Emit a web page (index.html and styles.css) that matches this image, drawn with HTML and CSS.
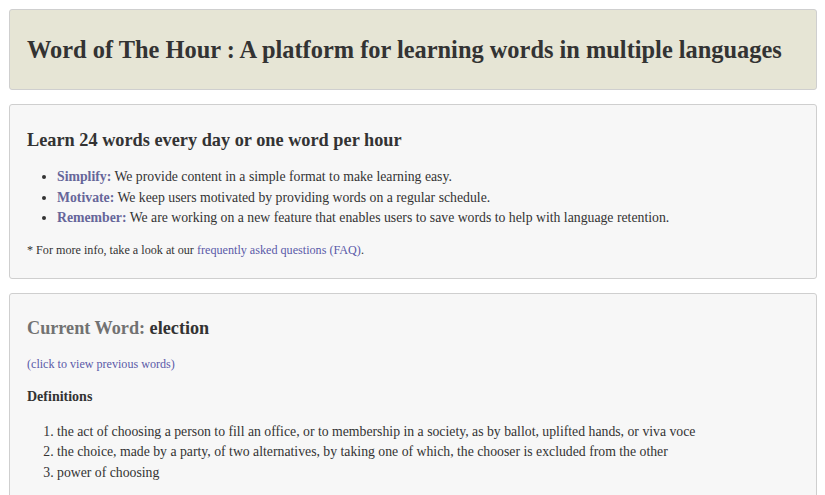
FILE: index.html
```html
<!DOCTYPE html>
<html>
<head>
<meta charset="utf-8">
<link rel="stylesheet" href="styles.css">
</head>
<body>
<div class="page">
  <header class="box header">
    <h1 class="title">Word of The Hour : A platform for learning words in multiple languages</h1>
  </header>
  <section class="box intro">
    <h2 class="subtitle">Learn 24 words every day or one word per hour</h2>
    <ul class="features">
      <li><strong class="label">Simplify:</strong> We provide content in a simple format to make learning easy.</li>
      <li><strong class="label">Motivate:</strong> We keep users motivated by providing words on a regular schedule.</li>
      <li><strong class="label">Remember:</strong> We are working on a new feature that enables users to save words to help with language retention.</li>
    </ul>
    <p class="note">* For more info, take a look at our <a class="link" href="#">frequently asked questions (FAQ)</a>.</p>
  </section>
  <section class="box word">
    <h2 class="word-title"><span class="word-label">Current Word:</span> election</h2>
    <p class="prev"><a class="link" href="#">(click to view previous words)</a></p>
    <h3 class="def-title">Definitions</h3>
    <ol class="defs">
      <li>the act of choosing a person to fill an office, or to membership in a society, as by ballot, uplifted hands, or viva voce</li>
      <li>the choice, made by a party, of two alternatives, by taking one of which, the chooser is excluded from the other</li>
      <li>power of choosing</li>
    </ol>
  </section>
</div>
</body>
</html>
```
FILE: styles.css
```css
html, body {
  margin: 0;
  padding: 0;
  background: #ffffff;
}
body {
  font-family: "Liberation Serif", "Times New Roman", serif;
  color: #333333;
}
.page {
  padding: 9px 8px 9px 9px;
  display: flex;
  flex-direction: column;
  gap: 14px;
}
.box {
  border: 1px solid #cfcfcf;
  border-radius: 3px;
  background: #f7f7f7;
  padding: 0 17px;
}
.header {
  background: #e6e5d5;
  height: 79px;
  display: flex;
  align-items: center;
}
.title {
  margin: 0;
  font-size: 24.4px;
  line-height: 28px;
  font-weight: bold;
  color: #333333;
}
.intro {
  padding-top: 24px;
  padding-bottom: 20px;
}
.subtitle {
  margin: 0 0 15px;
  font-size: 18.3px;
  line-height: 23px;
  font-weight: bold;
}
.features {
  margin: 0 0 14px;
  padding-left: 30px;
  font-size: 13.75px;
  line-height: 20.5px;
}
.label {
  color: #66669a;
}
.note {
  margin: 0;
  font-size: 12.15px;
  line-height: 15px;
}
.link {
  color: #5a5aa8;
  text-decoration: none;
}
.word {
  padding-top: 23px;
  padding-bottom: 20px;
}
.word-title {
  margin: 0 0 18px;
  font-size: 18.2px;
  line-height: 22px;
  font-weight: bold;
}
.word-label {
  color: #727272;
}
.prev {
  margin: 0 0 16px;
  font-size: 12.1px;
  line-height: 15px;
}
.def-title {
  margin: 0 0 17px;
  font-size: 14px;
  line-height: 17px;
  font-weight: bold;
}
.defs {
  margin: 0;
  padding-left: 30px;
  font-size: 13.75px;
  line-height: 20.5px;
}
```
